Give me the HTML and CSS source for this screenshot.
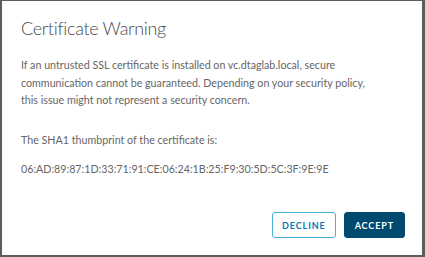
FILE: index.html
```html
<!DOCTYPE html>
<html lang="en">
<head>
    <meta charset="UTF-8">
    <meta name="viewport" content="width=device-width, initial-scale=1.0">
    <title>Certificate Warning</title>
    <link rel="stylesheet" href="styles.css">
</head>
<body>
    <div class="modal">
        <h1 class="modal-title">Certificate Warning</h1>
        <div class="modal-body">
            <p class="warning">If an untrusted SSL certificate is installed on vc.dtaglab.local, secure<br>
            communication cannot be guaranteed. Depending on your security policy,<br>
            this issue might not represent a security concern.</p>
            <p>The SHA1 thumbprint of the certificate is:</p>
            <p>06:AD:89:87:1D:33:71:91:CE:06:24:1B:25:F9:30:5D:5C:3F:9E:9E</p>
        </div>
        <div class="modal-footer">
            <button class="btn btn-outline">Decline</button>
            <button class="btn btn-primary">Accept</button>
        </div>
    </div>
</body>
</html>
```

FILE: styles.css
```css
* {
    margin: 0;
    padding: 0;
    box-sizing: border-box;
    font-family: Lato, 'Open Sans', sans-serif;
}

body {
    background: #ffffff;
    color: #666666;
}

.modal {
    width: 425px;
    height: 257px;
    background: white;
    border-style: solid;
    border-color: #5c5c5c;
    border-width: 1px 3px 2px 2px;
    padding: 15px 19px 0 19px;
    display: flex;
    flex-direction: column;
}

.modal-title {
    font-size: 18px;
    font-weight: 300;
    letter-spacing: -0.3px;
    color: #4a4a4a;
    line-height: 24px;
}

.modal-body {
    margin-top: 16px;
    font-size: 10.7px;
    line-height: 17.5px;
}

.modal-body p {
    margin-bottom: 11.5px;
}

.modal-body .warning {
    margin-bottom: 22px;
}

.modal-footer {
    display: flex;
    justify-content: flex-end;
    gap: 8px;
    margin-top: auto;
    margin-bottom: 17px;
    margin-right: -2px;
}

.btn {
    height: 26px;
    padding: 0 9px;
    border-radius: 3px;
    font-size: 9px;
    font-weight: 700;
    letter-spacing: 0.9px;
    text-transform: uppercase;
}

.btn-outline {
    background: white;
    border: 1px solid #49afd9;
    color: #0079b8;
}

.btn-primary {
    background: #004a70;
    border: 1px solid #004a70;
    color: white;
    padding: 0 10px;
}
```
